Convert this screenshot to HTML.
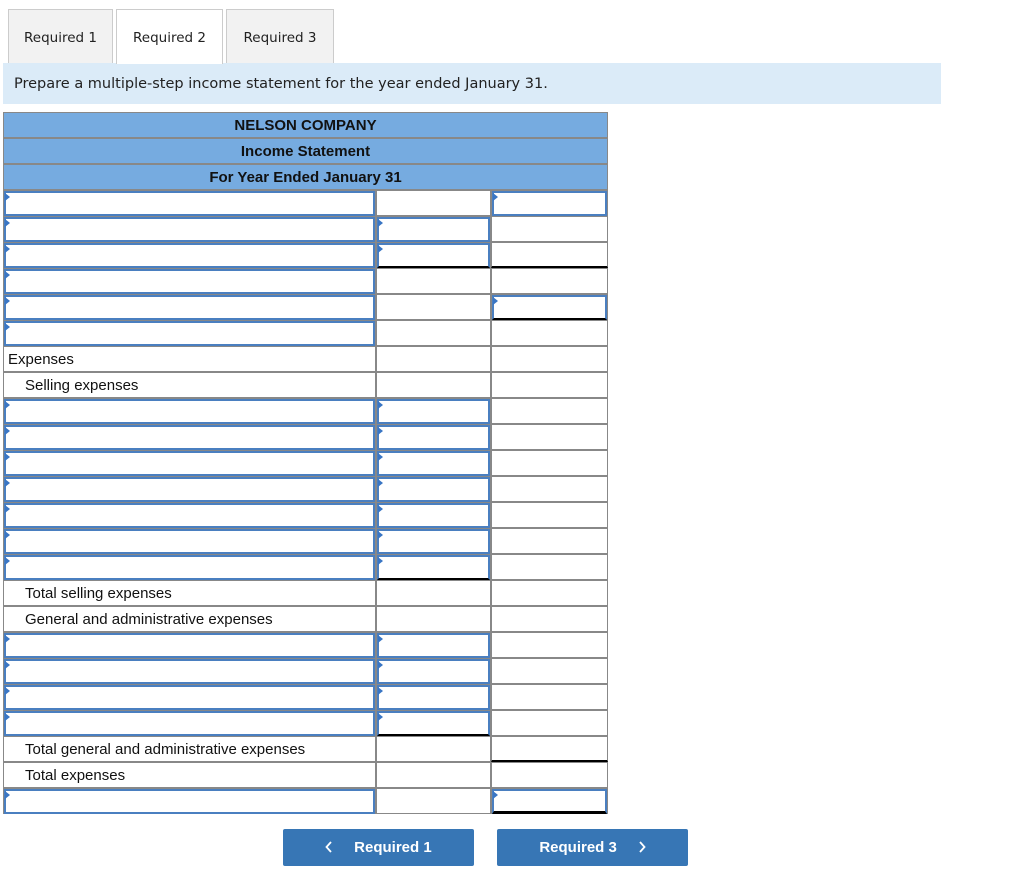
<!DOCTYPE html>
<html><head><meta charset="utf-8"><style>
*{box-sizing:border-box;margin:0;padding:0}
body{width:1024px;height:888px;background:#fff;font-family:"Liberation Sans",sans-serif;position:relative;overflow:hidden}
.tab{position:absolute;top:9px;height:54px;border:1px solid #ccc;border-bottom:none;background:#f2f2f2;font-family:"DejaVu Sans",sans-serif;font-size:13.5px;color:#222;text-align:center;line-height:56px}
.tab.a{background:#fff;height:55px;z-index:2}
.banner{position:absolute;left:3px;top:63px;width:938px;height:41px;background:#dbebf8;font-family:"DejaVu Sans",sans-serif;font-size:14.5px;color:#222;line-height:43px;padding-left:11px}
.hd{position:absolute;left:3px;width:605px;height:26px;background:#76abe0;border:1px solid #888;text-align:center;font-weight:bold;font-size:15px;line-height:26px;color:#111}
.c{position:absolute;height:26px;border:1px solid #888;background:#fff;font-size:15px;line-height:26px;color:#111}
.in{position:absolute;height:26px;border:2px solid #4a7fc0;background:#fff}
.in:before{content:"";position:absolute;left:-1px;top:0;border-left:5px solid #3a76c4;border-top:4px solid transparent;border-bottom:4px solid transparent}
.bk{border-bottom:2px solid #000}
.bk3{border-bottom:3px solid #000}
.btn{position:absolute;top:829px;height:37px;width:191px;background:#3776b5;color:#fff;font-weight:bold;font-size:15px;text-align:center;line-height:37px;border-radius:2px}
.btn svg{vertical-align:-1px}
</style></head><body>
<div class="tab" style="left:8px;width:105px">Required 1</div>
<div class="tab a" style="left:116px;width:107px">Required 2</div>
<div class="tab" style="left:226px;width:108px">Required 3</div>
<div class="banner">Prepare a multiple-step income statement for the year ended January 31.</div>
<div class="hd" style="top:112px">NELSON COMPANY</div>
<div class="hd" style="top:138px">Income Statement</div>
<div class="hd" style="top:164px">For Year Ended January 31</div>
<div id="t"></div>
<div class="btn" style="left:283px"><svg width="8" height="12" viewBox="0 0 8 12"><path d="M6 1L1.5 6L6 11" stroke="#fff" stroke-width="1.8" fill="none"/></svg>&nbsp;&nbsp;&nbsp;&nbsp;&nbsp;Required 1</div>
<div class="btn" style="left:497px">Required 3&nbsp;&nbsp;&nbsp;&nbsp;&nbsp;<svg width="8" height="12" viewBox="0 0 8 12"><path d="M2 1L6.5 6L2 11" stroke="#fff" stroke-width="1.8" fill="none"/></svg></div>
<script>
var rows=[
['i','','i'],['i','i',''],['i','ib','b'],['i','',''],['i','','ib'],['i','',''],
['Expenses','',''],['  Selling expenses','',''],
['i','i',''],['i','i',''],['i','i',''],['i','i',''],['i','i',''],['i','i',''],['i','ib',''],
['  Total selling expenses','',''],['  General and administrative expenses','',''],
['i','i',''],['i','i',''],['i','i',''],['i','ib',''],
['  Total general and administrative expenses','','b'],['  Total expenses','',''],['i','','ib3']];
var cols=[[3,373],[376,115],[491,117]];var h='';
rows.forEach(function(r,i){var y=190+i*26;
r.forEach(function(v,j){var x=cols[j][0],w=cols[j][1];
if(v=='i'||v=='ib'||v=='ib3'){h+='<div class="c" style="left:'+x+'px;top:'+y+'px;width:'+w+'px"></div><div class="in'+(v=='ib'?' bk':v=='ib3'?' bk3':'')+'" style="left:'+(x+1)+'px;top:'+(y+1)+'px;width:'+(w-2)+'px;height:25px"></div>';}
else if(v=='b'){h+='<div class="c bk" style="left:'+x+'px;top:'+y+'px;width:'+w+'px"></div>';}
else{var ind=v.indexOf('  ')==0;h+='<div class="c" style="left:'+x+'px;top:'+y+'px;width:'+w+'px;padding-left:'+(ind?21:4)+'px">'+v.trim()+'</div>';}
});});
document.getElementById('t').innerHTML=h;
</script>
</body></html>
